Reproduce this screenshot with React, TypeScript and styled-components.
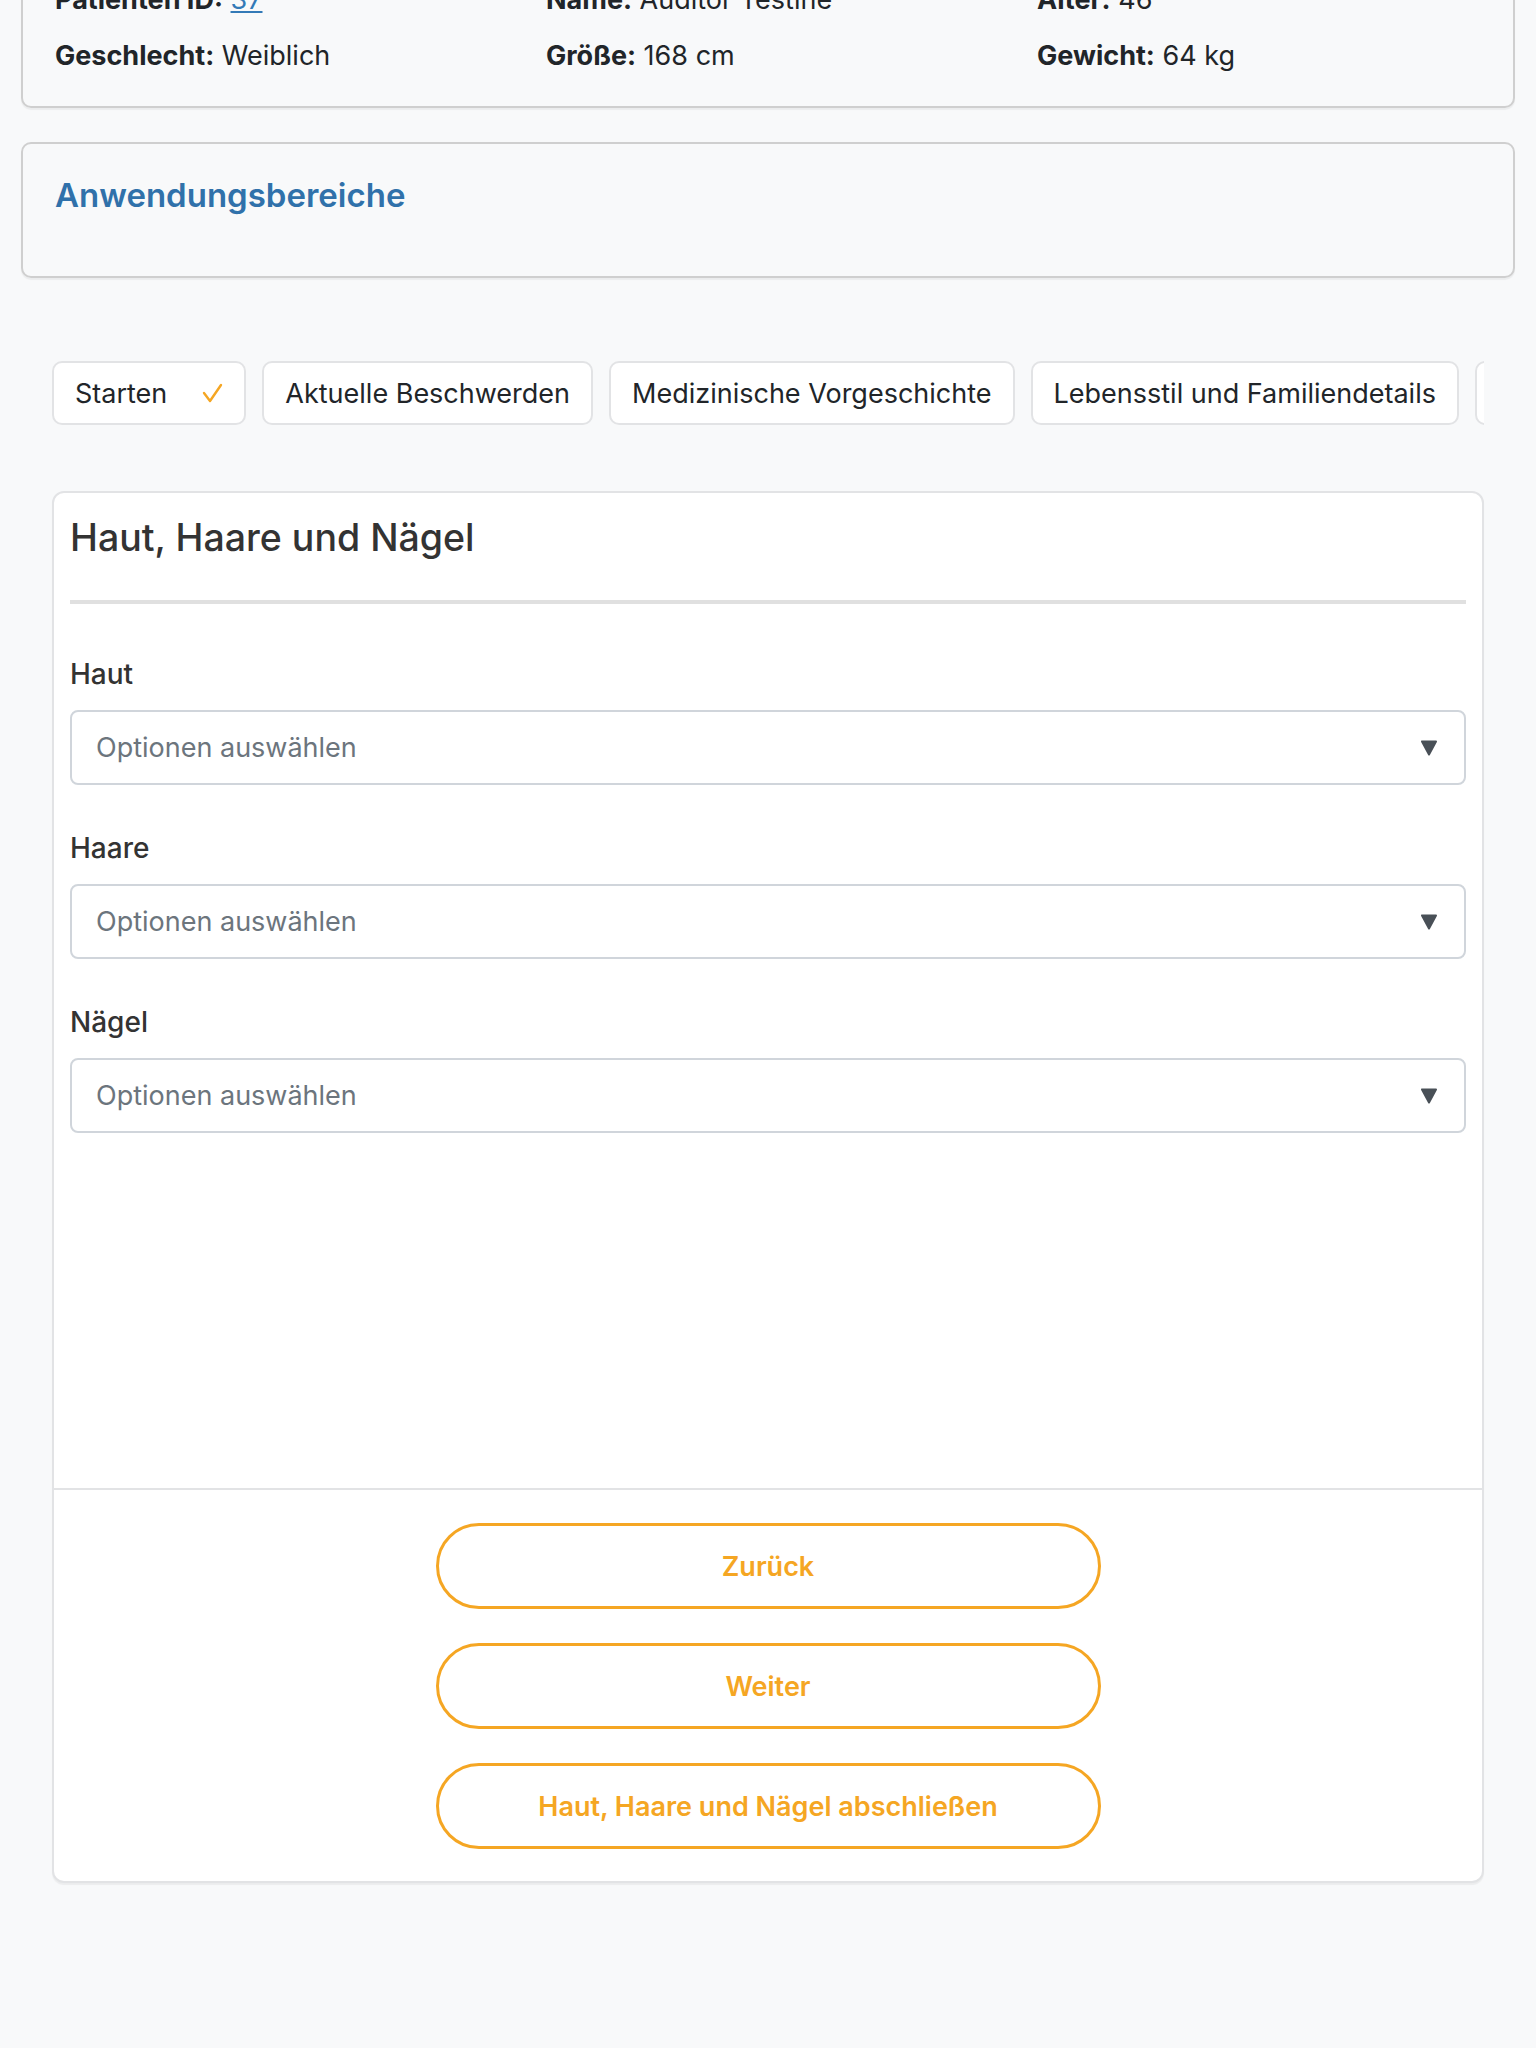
import { createGlobalStyle, styled } from 'styled-components';

const GlobalStyle = createGlobalStyle`
  body {
    margin: 0;
    background: #f8f9fa;
    font-family: Inter, "Noto Sans", "Liberation Sans", sans-serif;
    color: #212529;
  }
`;

const patientInfo = [
  { label: 'Patienten ID:', value: '37', link: true },
  { label: 'Name:', value: 'Auditor Testine' },
  { label: 'Alter:', value: '46' },
  { label: 'Geschlecht:', value: 'Weiblich' },
  { label: 'Größe:', value: '168 cm' },
  { label: 'Gewicht:', value: '64 kg' }
];

const steps = [
  { title: 'Starten', done: true },
  { title: 'Aktuelle Beschwerden' },
  { title: 'Medizinische Vorgeschichte' },
  { title: 'Lebensstil und Familiendetails' },
  { title: 'Haut, Haare und Nägel' }
];

const fields = ['Haut', 'Haare', 'Nägel'];

const CheckIcon = () => (
  <svg width='21' height='20' viewBox='0 0 21 20' fill='none'>
    <polyline points='2,10 8,18 19,2' stroke='#f5a623' strokeWidth='2.4' strokeLinecap='round' strokeLinejoin='round' />
  </svg>
);

const CaretIcon = () => (
  <svg width='18' height='18' viewBox='0 0 18 18'>
    <path d='M2 2.5 H16 L9 15.5 Z' fill='#495057' stroke='#495057' strokeWidth='2' strokeLinejoin='round' />
  </svg>
);

const App = () => {
  return (
    <>
      <GlobalStyle />
      <Page>
        <InfoCard>
          {patientInfo.map((item) => (
            <InfoItem key={item.label}>
              <b>{item.label}</b> {item.link ? <a href='#'>{item.value}</a> : item.value}
            </InfoItem>
          ))}
        </InfoCard>

        <AreasCard>
          <h2>Anwendungsbereiche</h2>
        </AreasCard>

        <StepsBar>
          <StepList>
            {steps.map((step) => (
              <StepTab key={step.title}>
                {step.title}
                {step.done ? <CheckIcon /> : null}
              </StepTab>
            ))}
          </StepList>
        </StepsBar>

        <FormCard>
          <FormBody>
            <FormTitle>Haut, Haare und Nägel</FormTitle>
            {fields.map((name) => (
              <Field key={name}>
                <FieldLabel>{name}</FieldLabel>
                <SelectBox>
                  <span>Optionen auswählen</span>
                  <CaretIcon />
                </SelectBox>
              </Field>
            ))}
          </FormBody>
          <FormFooter>
            <OutlineButton>Zurück</OutlineButton>
            <OutlineButton>Weiter</OutlineButton>
            <OutlineButton>Haut, Haare und Nägel abschließen</OutlineButton>
          </FormFooter>
        </FormCard>
      </Page>
    </>
  );
};

export default App;

const Page = styled.div`
  margin-top: -51px;
  padding: 0 21px 120px;
`;

const InfoCard = styled.section`
  display: grid;
  grid-template-columns: repeat(3, 1fr);
  column-gap: 47px;
  row-gap: 26px;
  padding: 34px 32px 35px;
  border: 2px solid #cfcfcf;
  border-radius: 10px;
  box-shadow: 0 2px 1px rgba(0, 0, 0, 0.05);
`;

const InfoItem = styled.div`
  font-size: 27px;
  line-height: 30px;
  color: #212529;

  b {
    font-weight: 700;
  }

  a {
    color: #337ab7;
    text-decoration: underline;
  }
`;

const AreasCard = styled.section`
  margin-top: 34px;
  padding: 31px 32px 61px;
  border: 2px solid #cfcfcf;
  border-radius: 10px;
  box-shadow: 0 2px 1px rgba(0, 0, 0, 0.05);

  h2 {
    margin: 0;
    font-size: 33px;
    line-height: 40px;
    font-weight: 600;
    color: #3071aa;
  }
`;

const StepsBar = styled.nav`
  margin: 83px 31px 0;
  overflow: hidden;
`;

const StepList = styled.div`
  display: flex;
  gap: 16px;
`;

const StepTab = styled.div`
  flex-shrink: 0;
  display: flex;
  align-items: center;
  gap: 35px;
  box-sizing: border-box;
  height: 64px;
  padding: 0 21px;
  background: #fff;
  border: 2px solid #e2e3e5;
  border-radius: 10px;
  font-size: 27px;
  color: #212529;
  white-space: nowrap;
`;

const FormCard = styled.section`
  margin: 66px 31px 0;
  background: #fff;
  border: 2px solid #e2e3e5;
  border-radius: 12px;
  box-shadow: 0 2px 1px rgba(0, 0, 0, 0.05);
`;

const FormBody = styled.div`
  box-sizing: border-box;
  min-height: 995px;
  padding: 16px;
`;

const FormTitle = styled.h3`
  margin: 7px 0 55px;
  padding-bottom: 40px;
  border-bottom: 4px solid #e0e0e0;
  font-size: 37.5px;
  line-height: 44px;
  font-weight: 500;
  color: #333;
`;

const Field = styled.div`
  margin-bottom: 48px;
`;

const FieldLabel = styled.div`
  margin-bottom: 21px;
  font-size: 28px;
  line-height: 30px;
  font-weight: 500;
  color: #333;
`;

const SelectBox = styled.div`
  display: flex;
  align-items: center;
  justify-content: space-between;
  box-sizing: border-box;
  height: 75px;
  padding: 0 26px 0 24px;
  border: 2px solid #d0d5db;
  border-radius: 8px;
  background: #fff;
  font-size: 27px;
  color: #6c757d;
`;

const FormFooter = styled.div`
  display: flex;
  flex-direction: column;
  align-items: center;
  gap: 34px;
  padding: 33px 0 32px;
  border-top: 2px solid #e2e3e5;
`;

const OutlineButton = styled.button`
  box-sizing: border-box;
  width: 665px;
  height: 86px;
  border: 3px solid #f5a623;
  border-radius: 43px;
  background: #fff;
  color: #f5a623;
  font-family: Inter, "Noto Sans", sans-serif;
  font-size: 27px;
  font-weight: 600;
  cursor: pointer;
`;
